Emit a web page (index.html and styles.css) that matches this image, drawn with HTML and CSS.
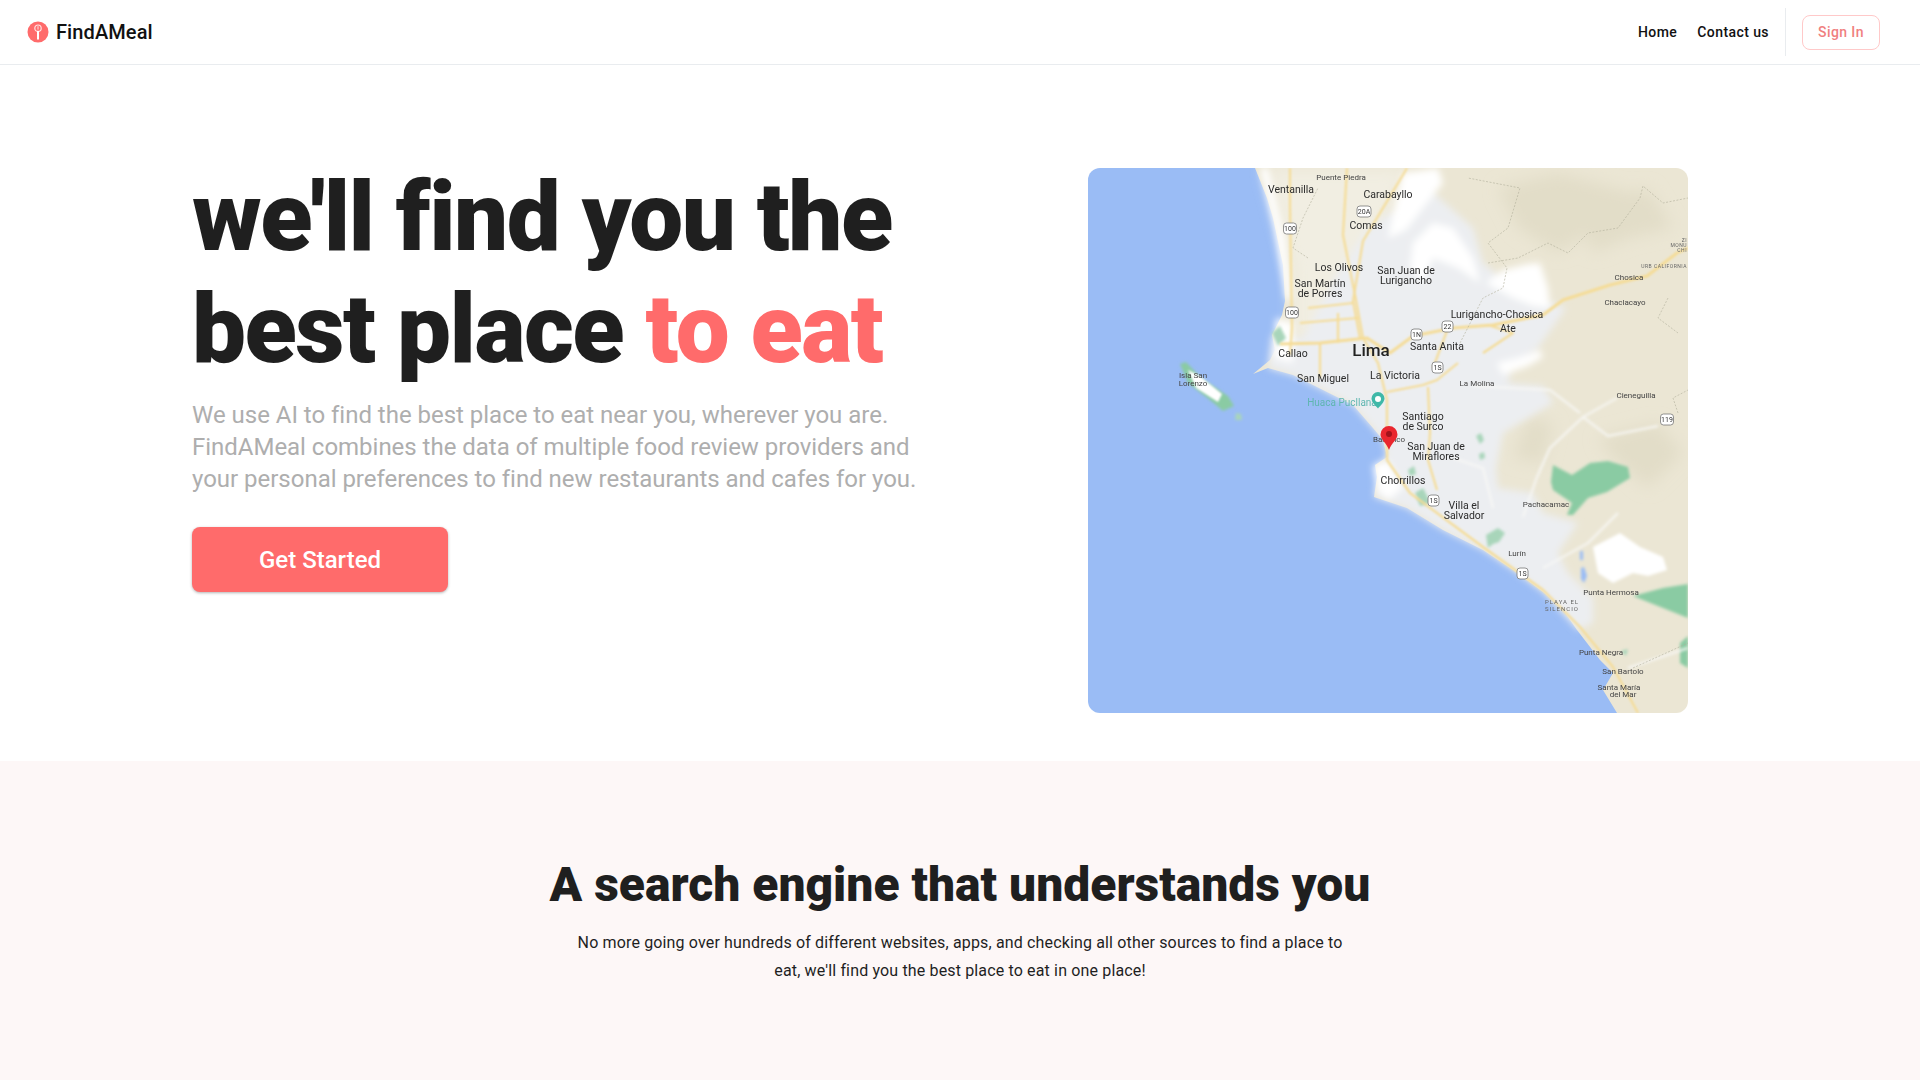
FILE: index.html
```html
<!DOCTYPE html>
<html lang="en">
<head>
<meta charset="utf-8">
<title>FindAMeal</title>
<link rel="stylesheet" href="styles.css">
</head>
<body>
<header class="nav">
  <a class="brand" href="#">
    <svg class="brand-icon" viewBox="0 0 22 22" width="22" height="22" aria-hidden="true">
      <circle cx="11" cy="11" r="10.5" fill="#ff6b6b"/>
      <circle cx="11" cy="7.2" r="3.2" fill="none" stroke="#ffe3e3" stroke-width="1.2"/>
      <path d="M11 5.2v3.4" stroke="#ffe3e3" stroke-width="1"/>
      <path d="M11 10v8.5" stroke="#fff" stroke-width="2"/>
    </svg>
    <span>FindAMeal</span>
  </a>
  <nav class="nav-right">
    <a class="nav-link" href="#">Home</a>
    <a class="nav-link" href="#">Contact us</a>
    <span class="nav-divider"></span>
    <a class="signin" href="#">Sign In</a>
  </nav>
</header>

<section class="hero">
  <div class="hero-copy">
    <h1>we'll find you the<br>best place <span class="accent">to eat</span></h1>
    <p class="lead">We use AI to find the best place to eat near you, wherever you are. FindAMeal combines the data of multiple food review providers and your personal preferences to find new restaurants and cafes for you.</p>
    <a class="cta" href="#">Get Started</a>
  </div>
  <div class="map">
    <svg class="map-svg" viewBox="0 0 600 545" width="600" height="545" role="img" aria-label="Map of Lima">
      <defs>
        <filter id="b8" x="-30%" y="-30%" width="160%" height="160%"><feGaussianBlur stdDeviation="8"/></filter>
        <filter id="b4" x="-20%" y="-20%" width="140%" height="140%"><feGaussianBlur stdDeviation="3.500"/></filter>
        <filter id="b2" x="-20%" y="-20%" width="140%" height="140%"><feGaussianBlur stdDeviation="1.800"/></filter>
        <filter id="b1" x="-10%" y="-10%" width="120%" height="120%"><feGaussianBlur stdDeviation="0.800"/></filter>
      </defs>
      <rect class="water" width="600" height="545"/>
      <path class="land" d="M167 0L179 30 185 50 195 97 197 133 194 147 184 167 187 182 182 192 165 206 180 200 205 207 239 224 265 237 285 260 295 272 299 289 287 297 289 309 286 329 319 340 355 362 395 382 425 402 455 424 475 442 489 462 499 475 512 492 525 505 515 522 529 545H600V0Z"/>
      <g filter="url(#b8)">
        <path class="terrain" d="M410 20L470 5 545 25 510 60 470 85 430 60Z"/>
        <path class="terrain" d="M490 40L560 20 585 60 540 70 505 85Z"/>
        <path class="terrain" d="M510 270L570 255 595 285 560 320 525 290Z"/>
        <path class="terrain" d="M440 250L465 255 455 295 425 290Z"/>
        <path class="coastal" d="M178 0H320L300 50 280 100 270 170 205 175 205 100Z"/>
      </g>
      <g filter="url(#b4)">
        <path class="urban" d="M215 170L250 105 280 60 310 40 340 20 385 60 395 95 420 115 450 130 478 140 450 180 425 195 420 215 455 218 465 235 440 250 415 265 408 300 410 320 445 325 455 345 490 355 470 385 480 405 505 430 505 455 490 462 455 424 425 402 395 382 355 362 319 340 286 329 289 309 287 297 299 289 295 272 285 260 265 237 239 224 205 207 180 200 184 167Z"/>
        <path class="whitepatch" d="M398 115L415 102 440 96 452 95 460 120 462 140 445 138 425 130Z"/>
        <path class="whitepatch" d="M409 195L430 190 452 182 455 189 440 198 415 207Z"/>
        <path class="whitepatch" d="M315 5L350 0 355 15 335 40 318 62 300 70 305 45Z"/>
        <path class="whitepatch" d="M325 75L345 55 365 60 385 90 392 115 370 100 345 90 335 115 322 100Z"/>
        <path class="whitepatch" d="M285 297L300 293 315 320 300 332 289 322Z"/>
        <path class="whitepatch" d="M188 150L205 155 205 195 186 190Z"/>
        <path class="whitepatch" d="M172 0L180 0 197 70 204 130 198 132 186 60Z"/>
      </g>
      <g filter="url(#b2)">
        <path class="whitepatch" d="M505 379L532 365 552 379 575 389 579 402 560 408 545 405 525 415 510 405Z"/>
        <path class="green" d="M465 297L484 307 502 295 520 293 540 299 542 310 519 324 500 330 485 347 479 347 484 335 465 322 463 314Z"/>
        <path class="green" d="M545 428L575 420 600 416V450L575 440Z"/>
        <path class="green" d="M592 475L600 468V500L592 495Z"/>
        <path class="green-soft" d="M398 367L410 360 417 365 411 374 405 376 400 380Z"/>
        <path class="green-soft" d="M327 325L335 320 343 335 332 338Z"/>
        <path class="green-soft" d="M184 165L192 158 198 170 190 178Z"/>
        <path class="green-soft" d="M388 268L393 265 396 272 392 276Z"/>
        <path class="green-soft" d="M391 286L396 284 397 290 392 292Z"/>
        <path class="green-soft" d="M533 483L540 481 538 488Z"/>
        <path class="green" d="M92 196L98 194 113 210 140 228 146 238 135 243 122 232 100 215Z"/>
        <path class="green-soft" d="M148 245L153 246 154 252 147 252Z"/>
        <path class="green-soft" d="M320 302L326 298 328 306 322 308Z"/>
        <path class="lagoon" d="M492 383h3v9h-3z"/>
        <path class="lagoon" d="M493 400l3-1 3 9-3 7-3-4z"/>
      </g>
      <g filter="url(#b1)">
        <path class="islandwhite" d="M100 202L112 208 134 226 130 234 108 220Z"/>
      </g>
      <g class="roads-light" filter="url(#b2)">
        <path d="M385 218L405 219 462 222 492 245"/>
        <path d="M529 230L495 249 462 280 449 309 435 349"/>
        <path d="M495 249L520 268 570 258"/>
        <path d="M455 400L500 375 530 345"/>
        <path d="M365 290L395 300 405 340"/>
        <path d="M540 500L600 480"/>
      </g>
      <g class="roads" filter="url(#b1)">
        <path d="M259 0L255 67 267 127 275 170 290 195 299 232 299 265 299 292 322 325 376 365 395 379 455 422 492 459 525 499 550 545"/>
        <path d="M202 0L202 40 204 160 202 187"/>
        <path d="M319 0L295 40 275 73 265 133 272 170"/>
        <path class="major" d="M192 176L232 175 279 170 302 185 325 168 365 160 405 157 455 147 475 132 522 117 559 108 589 85 600 80"/>
        <path d="M299 224L335 217 349 212 370 195"/>
        <path d="M340 219L342 265 340 292 349 322"/>
        <path d="M232 175V210"/>
        <path d="M212 155L270 150"/>
        <path d="M345 200L360 160"/>
        <path d="M220 140L265 135"/>
        <path d="M250 175V145"/>
        <path d="M400 157L425 165 395 185"/>
      </g>
      <g class="borders">
        <path d="M372 175L395 130 415 120 419 100 400 75 420 60 432 20 380 10"/>
        <path d="M400 95L430 90 460 75 480 85 500 65 530 60 552 30 555 18 575 35 600 30"/>
        <path d="M580 130L570 150 590 165"/>
        <path d="M590 245L585 230 600 222"/>
        <path d="M220 90L205 80 215 50 230 20"/>
        <path d="M545 500L600 475"/>
      </g>

      <g class="shield">
        <rect x="195.500" y="55" width="13" height="11" rx="3"/><text x="202" y="63">100</text>
        <rect x="197.500" y="139" width="13" height="11" rx="3"/><text x="204" y="147">100</text>
        <rect x="269" y="38" width="14" height="11" rx="3"/><text x="276" y="46">20A</text>
        <rect x="354" y="153" width="11" height="11" rx="3"/><text x="359.500" y="161">22</text>
        <rect x="323" y="161" width="11" height="11" rx="3"/><text x="328.500" y="169">1N</text>
        <rect x="344" y="194" width="11" height="11" rx="3"/><text x="349.500" y="202">1S</text>
        <rect x="340" y="327" width="11" height="11" rx="3"/><text x="345.500" y="335">1S</text>
        <rect x="429" y="400" width="11" height="11" rx="3"/><text x="434.500" y="408">1S</text>
        <rect x="572.500" y="246" width="13" height="11" rx="3"/><text x="579" y="254">119</text>
      </g>

      <g class="lbl">
        <text x="203" y="25">Ventanilla</text>
        <text x="300" y="30">Carabayllo</text>
        <text x="278" y="61">Comas</text>
        <text x="251" y="103">Los Olivos</text>
        <text x="318" y="106">San Juan de</text>
        <text x="318" y="116">Lurigancho</text>
        <text x="232" y="119">San Martín</text>
        <text x="232" y="129">de Porres</text>
        <text x="205" y="189">Callao</text>
        <text x="349" y="182">Santa Anita</text>
        <text x="409" y="150">Lurigancho-Chosica</text>
        <text x="420" y="164">Ate</text>
        <text x="307" y="211">La Victoria</text>
        <text x="235" y="214">San Miguel</text>
        <text x="335" y="252">Santiago</text>
        <text x="335" y="262">de Surco</text>
        <text x="348" y="282">San Juan de</text>
        <text x="348" y="292">Miraflores</text>
        <text x="315" y="316">Chorrillos</text>
        <text x="376" y="341">Villa el</text>
        <text x="376" y="351">Salvador</text>
      </g>
      <text class="city" x="283" y="188">Lima</text>
      <text class="poi" x="254" y="238">Huaca Pucllana</text>
      <g class="lbl-sm">
        <text x="253" y="12">Puente Piedra</text>
        <text x="541" y="112">Chosica</text>
        <text x="537" y="137">Chaclacayo</text>
        <text x="389" y="218">La Molina</text>
        <text x="548" y="230">Cieneguilla</text>
        <text x="458" y="339">Pachacamac</text>
        <text x="429" y="388">Lurín</text>
        <text x="523" y="427">Punta Hermosa</text>
        <text x="513" y="487">Punta Negra</text>
        <text x="535" y="506">San Bartolo</text>
        <text x="531" y="522">Santa María</text>
        <text x="535" y="529">del Mar</text>
        <text x="105" y="210">Isla San</text>
        <text x="105" y="218">Lorenzo</text>
        <text x="301" y="274">Barranco</text>
      </g>
      <g class="lbl-caps">
        <text x="474" y="436">PLAYA EL</text>
        <text x="474" y="443">SILENCIO</text>
      </g>
      <g class="lbl-edge">
        <text x="599" y="100">URB CALIFORNIA</text>
        <text x="599" y="74">ZI</text>
        <text x="599" y="79">MONU</text>
        <text x="599" y="84">CHI</text>
      </g>
      <g>
        <path class="poi-pin" d="M290 224a6.500 6.500 0 0 1 6.500 6.500c0 3.500-4 7-6.500 10-2.500-3-6.500-6.500-6.500-10a6.500 6.500 0 0 1 6.500-6.500z"/>
        <circle class="poi-dot" cx="290" cy="231" r="3"/>
        <path class="pin" d="M301 258a8.500 8.500 0 0 1 8.500 8.500c0 5-6 8.500-8.500 15.500-2.500-7-8.500-10.500-8.500-15.500a8.500 8.500 0 0 1 8.500-8.500z"/>
        <circle class="pin-dot" cx="301" cy="266" r="3"/>
      </g>
    </svg>
  </div>
</section>

<section class="engine">
  <h2>A search engine that understands you</h2>
  <p>No more going over hundreds of different websites, apps, and checking all other sources to find a place to eat, we'll find you the best place to eat in one place!</p>
</section>
</body>
</html>
```
FILE: styles.css
```css
* { box-sizing: border-box; }
html, body { margin: 0; height: 100%; }
body {
  font-family: Roboto, "Liberation Sans", sans-serif;
  color: #1a1b1e;
  background: #fff;
  display: flex;
  flex-direction: column;
  overflow: hidden;
}
a { text-decoration: none; color: inherit; }

.nav {
  height: 65px;
  flex: none;
  display: flex;
  align-items: center;
  justify-content: space-between;
  padding: 0 40px 0 27px;
  border-bottom: 1px solid #e9ecef;
}
.brand { display: flex; align-items: center; gap: 7px; font-size: 20px; font-weight: 500; letter-spacing: .1px; color: #111; }
.brand-icon { display: block; }
.nav-right { display: flex; align-items: center; height: 48px; }
.nav-link { font-size: 14px; font-weight: 500; letter-spacing: .42px; margin-right: 20px; color: #111; }
.nav-link + .nav-link { margin-right: 16px; }
.nav-divider { width: 1px; height: 48px; background: #e9ecef; margin-right: 16px; }
.signin {
  display: flex;
  align-items: center;
  justify-content: center;
  width: 78px;
  height: 35px;
  border: 1px solid #ffc9c9;
  border-radius: 8px;
  color: #f07f7f;
  font-size: 14px;
  font-weight: 500;
  letter-spacing: .42px;
}

.hero {
  flex: none;
  height: 696px;
  display: flex;
  justify-content: space-between;
  align-items: flex-start;
  padding: 103px 232px 0 192px;
}
.hero-copy { width: 760px; margin-top: -7px; }
h1 {
  margin: 0;
  font-size: 96px;
  line-height: 112px;
  font-weight: 900;
  letter-spacing: -1.5px;
  color: #1f1f1f;
}
.accent { color: #ff6b6b; }
.lead {
  margin: 14px 0 32px;
  width: 740px;
  font-size: 24px;
  line-height: 32px;
  letter-spacing: -.02px;
  color: #aeaeae;
}
.cta {
  display: flex;
  align-items: center;
  justify-content: center;
  width: 256px;
  height: 65px;
  border-radius: 8px;
  background: #ff6b6b;
  color: #fff;
  font-size: 24px;
  font-weight: 500;
  box-shadow: 0 1px 3px rgba(0,0,0,.3);
}

.map { width: 600px; height: 545px; border-radius: 12px; overflow: hidden; flex: none; }
.map-svg { display: block; filter: blur(.35px); }
.water { fill: #9abcf5; }
.land { fill: #ebe6d4; }
.terrain { fill: #e2ddc8; }
.coastal { fill: #f1eee2; }
.urban { fill: #eceef1; }
.whitepatch { fill: #fff; }
.islandwhite { fill: #fff; }
.green { fill: #8acba3; }
.green-soft { fill: #a8d5ba; }
.lagoon { fill: #9abcf5; }
.roads { fill: none; stroke: #f5dc96; stroke-width: 2.2; stroke-linejoin: round; }
.roads .major { stroke-width: 3; }
.roads-light { fill: none; stroke: #f8f8f6; stroke-width: 2; }
.borders { fill: none; stroke: #b0ae9a; stroke-width: .6; stroke-dasharray: 2 1.500; }
.shield rect { fill: #fff; stroke: #777; stroke-width: .8; }
.shield text { font-size: 7px; text-anchor: middle; fill: #333; }
.lbl text { font-size: 10.500px; text-anchor: middle; fill: #2b2b2b; }
.lbl-sm text { font-size: 8px; text-anchor: middle; fill: #444; }
.lbl-caps text { font-size: 6px; letter-spacing: 1px; text-anchor: middle; fill: #666; }
.lbl-edge text { font-size: 5px; letter-spacing: .5px; text-anchor: end; fill: #666; }
.city { font-size: 17px; font-weight: 500; text-anchor: middle; fill: #222; }
.poi { font-size: 10px; text-anchor: middle; fill: #5fb6b0; }
.poi-pin { fill: #3fb8a8; }
.poi-dot { fill: #fff; }
.pin { fill: #e9262e; }
.pin-dot { fill: #a1131b; }

.engine {
  flex: 1;
  padding: 96px 0 0;
  background: #fdf7f7;
  text-align: center;
}
.engine h2 {
  margin: 0;
  font-size: 48px;
  line-height: 56px;
  font-weight: 900;
  letter-spacing: 0;
  color: #1f1f1f;
}
.engine p {
  margin: 16px auto 0;
  width: 780px;
  font-size: 16px;
  line-height: 28px;
  letter-spacing: .15px;
  color: #1f1f1f;
}
```
